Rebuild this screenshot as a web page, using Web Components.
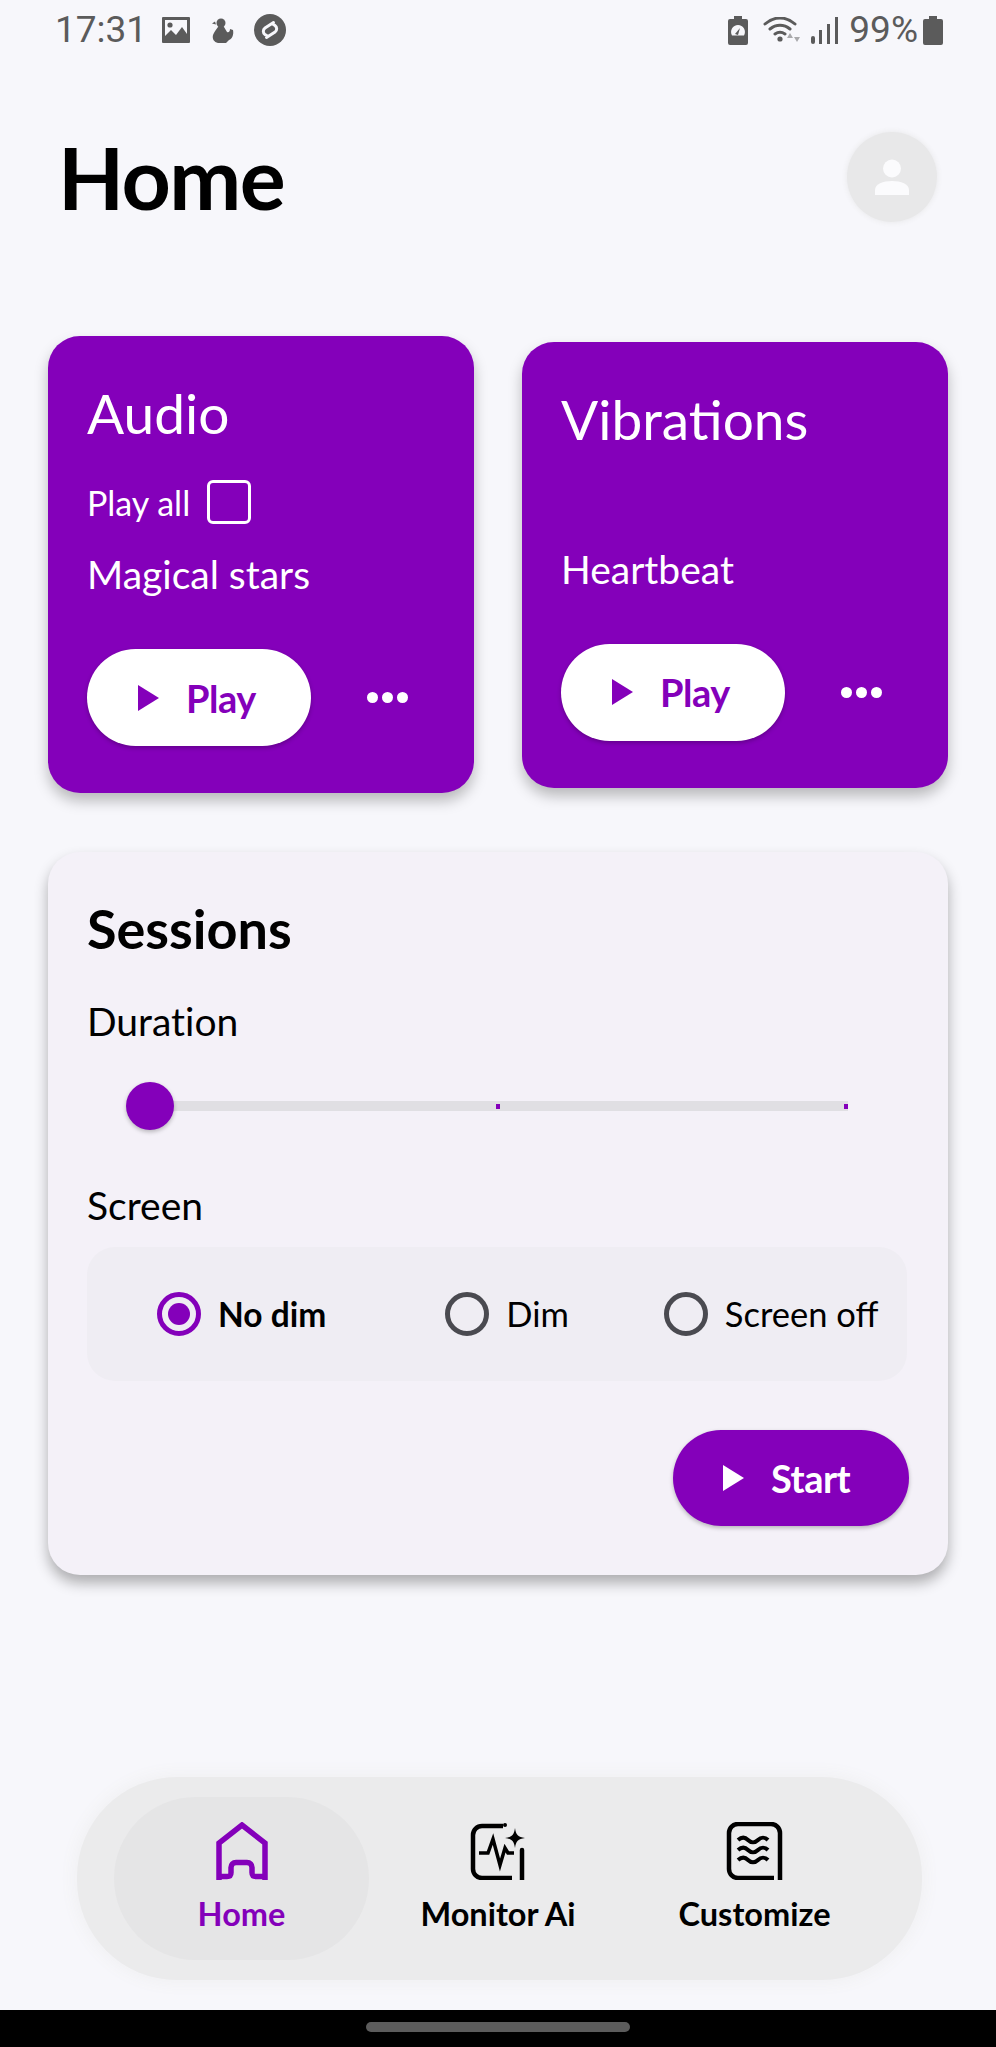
<!DOCTYPE html>
<html lang="en">
<head>
<meta charset="utf-8">
<title>Home</title>
<style>
  html, body { margin: 0; padding: 0; }
  body { background: #f7f7fb; font-family: Lato, "Liberation Sans", sans-serif; font-variant-ligatures: none; }
</style>
</head>
<body>
<app-screen>
  <status-bar></status-bar>
  <page-header>Home</page-header>
  <div slot="cards">
    <sound-card heading="Audio" track="Magical stars" playall></sound-card>
    <sound-card heading="Vibrations" track="Heartbeat"></sound-card>
  </div>
  <session-panel slot="session"></session-panel>
  <bottom-nav slot="nav">
    <nav-item icon="home" active>Home</nav-item>
    <nav-item icon="monitor">Monitor Ai</nav-item>
    <nav-item icon="customize">Customize</nav-item>
  </bottom-nav>
</app-screen>

<script>
const PURPLE = '#8400ba';

class AppScreen extends HTMLElement {
  connectedCallback() {
    this.attachShadow({ mode: 'open' });
    this.shadowRoot.innerHTML = `
      <style>
        :host { display: flex; flex-direction: column; width: 996px; height: 2047px; overflow: hidden; background: #f7f7fb; }
        ::slotted([slot=cards]) { display: grid; grid-template-columns: 426px 426px; column-gap: 48px; align-items: center; margin: 114px 48px 0; }
        ::slotted([slot=session]) { margin: 59px 48px 0; }
        ::slotted([slot=nav]) { margin: auto 74px 30px 77px; }
        .home-bar { height: 37px; background: #000; display: flex; align-items: center; justify-content: center; }
        .home-bar i { display: block; width: 264px; height: 10px; border-radius: 5px; background: #5c5c5c; margin-top: -3px; }
      </style>
      <slot></slot>
      <slot name="cards"></slot>
      <slot name="session"></slot>
      <slot name="nav"></slot>
      <div class="home-bar"><i></i></div>
    `;
  }
}

class StatusBar extends HTMLElement {
  connectedCallback() {
    this.attachShadow({ mode: 'open' });
    this.shadowRoot.innerHTML = `
      <style>
        :host { display: flex; align-items: center; justify-content: space-between; height: 60px; padding: 0 53px 0 55px; box-sizing: border-box; color: #5b5b5b; font: 400 37px/60px Roboto, sans-serif; }
        .side { display: flex; align-items: center; }
        svg { display: block; fill: #5b5b5b; }
      </style>
      <div class="side">
        <span>17:31</span>
        <svg style="margin-left:15px" width="28" height="26" viewBox="0 0 28 26"><path fill-rule="evenodd" d="M1 0h26a1 1 0 0 1 1 1v24a1 1 0 0 1-1 1H1a1 1 0 0 1-1-1V1a1 1 0 0 1 1-1zM3 3v16l6-6 5 5 6-8 5 7V3z"/><circle cx="8" cy="8" r="2.6"/></svg>
        <svg style="margin-left:22px" width="22" height="25" viewBox="0 0 22 25"><circle cx="9" cy="5" r="4.5"/><path d="M3 3.5 0 5.5l4 1zM6 9h6l3 5c2 1 3-1 3-3l3 1c1 5-1 9-4 10l-3 3H6c-4-1-6-4-5-8 1-3 3-5 5-8z"/></svg>
        <svg style="margin-left:20px" width="32" height="32" viewBox="0 0 32 32"><circle cx="16" cy="16" r="16"/><path d="M19.500 8.500 11 14a4 4 0 0 0 0 6.500l3 2M12.500 23.500 21 18a4 4 0 0 0 0-6.500l-3-2" fill="none" stroke="#f7f7fb" stroke-width="3" stroke-linecap="round"/></svg>
      </div>
      <div class="side">
        <svg width="20" height="29" viewBox="0 0 20 29"><path fill-rule="evenodd" d="M6 0h8v3h4a2 2 0 0 1 2 2v22a2 2 0 0 1-2 2H2a2 2 0 0 1-2-2V5a2 2 0 0 1 2-2h4zM10 9a7 7 0 0 0-6 10.500h12A7 7 0 0 0 10 9z"/><path d="M7 18l5-6-2 7z"/></svg>
        <svg style="margin-left:15px" width="38" height="26" viewBox="0 0 38 26"><path d="M2 7C11-1 23-1 32 7M7 12c6-5 14-5 20 0M12 17c3-2 7-2 10 0" fill="none" stroke="#5b5b5b" stroke-width="3" stroke-linecap="round"/><circle cx="17" cy="22" r="2.600"/><path d="M27 16l3 5h-6zM34 25l-3-5h6z" fill="#a9a9ab"/></svg>
        <svg style="margin-left:10px" width="28" height="27" viewBox="0 0 28 27"><rect x="0" y="19" width="4" height="8" rx="2"/><rect x="8" y="13" width="3" height="14"/><rect x="16" y="7" width="3" height="20"/><rect x="24" y="0" width="3" height="27"/></svg>
        <span style="margin-left:10px">99%</span>
        <svg style="margin-left:5px" width="20" height="29" viewBox="0 0 20 29"><path d="M6 0h8v3h4a2 2 0 0 1 2 2v22a2 2 0 0 1-2 2H2a2 2 0 0 1-2-2V5a2 2 0 0 1 2-2h4z"/></svg>
      </div>
    `;
  }
}

class PageHeader extends HTMLElement {
  connectedCallback() {
    this.attachShadow({ mode: 'open' });
    this.shadowRoot.innerHTML = `
      <style>
        :host { display: flex; align-items: center; justify-content: space-between; height: 90px; margin-top: 72px; padding: 0 59px 0 58px; }
        h1 { margin: 0; font: 700 86px/90px Lato, sans-serif; letter-spacing: -1.5px; color: #000; }
        .avatar { width: 90px; height: 90px; border-radius: 50%; background: #e8e8e9; box-shadow: 0 0 5px 1px #ebebed; display: flex; align-items: center; justify-content: center; }
        svg { display: block; fill: #fbfbfd; }
      </style>
      <h1><slot></slot></h1>
      <div class="avatar">
        <svg width="34" height="36" viewBox="0 0 34 36"><circle cx="17" cy="9.500" r="9"/><path d="M0 36v-5c0-6 8-9 17-9s17 3 17 9v5z"/></svg>
      </div>
    `;
  }
}

class PlayButton extends HTMLElement {
  connectedCallback() {
    this.attachShadow({ mode: 'open' });
    this.shadowRoot.innerHTML = `
      <style>
        :host { display: inline-flex; align-items: center; box-sizing: border-box; height: 97px; border-radius: 49px; background: var(--btn-bg, #fff); color: var(--btn-fg, ${PURPLE}); box-shadow: 0 2px 4px rgba(0,0,0,.25); font: 700 38px/1 Lato, sans-serif; letter-spacing: -.5px; padding-left: 51px; width: var(--btn-width, 224px); }
        svg { display: block; fill: currentColor; margin-right: 27px; flex: none; }
      </style>
      <svg width="21" height="26" viewBox="0 0 21 26"><path d="M0 0l21 13L0 26z"/></svg>
      <slot></slot>
    `;
  }
}

class SoundCard extends HTMLElement {
  connectedCallback() {
    const playAll = this.hasAttribute('playall');
    this.attachShadow({ mode: 'open' });
    this.shadowRoot.innerHTML = `
      <style>
        :host { display: block; }
        .card { background: ${PURPLE}; color: #fff; border-radius: 32px; padding: 46px 39px 47px; box-shadow: 0 8px 14px rgba(0,0,0,.25); font-family: Lato, sans-serif; }
        h2 { margin: 0; font: 400 55px/62px Lato, sans-serif; }
        .all { display: flex; align-items: center; gap: 17px; height: 44px; margin-top: 36px; font-size: 34px; }
        .box { width: 44px; height: 44px; box-sizing: border-box; border: 3px solid #fff; border-radius: 6px; }
        .spacer { height: 0; margin-top: 97px; }
        .track { font-size: 39px; line-height: 44px; margin-top: 28px; }
        .actions { display: flex; align-items: center; margin-top: 53px; }
        .dots { display: flex; gap: 4px; margin-left: 56px; }
        .dots i { display: block; width: 11px; height: 11px; border-radius: 50%; background: #fff; }
      </style>
      <div class="card">
        <h2>${this.getAttribute('heading')}</h2>
        ${playAll ? '<div class="all"><span>Play all</span><span class="box"></span></div>' : '<div class="spacer"></div>'}
        <div class="track">${this.getAttribute('track')}</div>
        <div class="actions">
          <play-button>Play</play-button>
          <div class="dots"><i></i><i></i><i></i></div>
        </div>
      </div>
    `;
  }
}

class DurationSlider extends HTMLElement {
  connectedCallback() {
    this.attachShadow({ mode: 'open' });
    this.shadowRoot.innerHTML = `
      <style>
        :host { display: block; position: relative; height: 48px; width: 722px; }
        .track { position: absolute; left: 24px; right: 0; top: 19px; height: 10px; background: #e0dfe3; }
        .tick { position: absolute; top: 22px; width: 4px; height: 5px; background: ${PURPLE}; }
        .thumb { position: absolute; left: 0; top: 0; width: 48px; height: 48px; border-radius: 50%; background: ${PURPLE}; box-shadow: 0 2px 4px rgba(0,0,0,.25); }
      </style>
      <div class="track"></div>
      <div class="tick" style="left:370px"></div>
      <div class="tick" style="left:718px"></div>
      <div class="thumb"></div>
    `;
  }
}

class RadioOption extends HTMLElement {
  connectedCallback() {
    const on = this.hasAttribute('checked');
    this.attachShadow({ mode: 'open' });
    this.shadowRoot.innerHTML = `
      <style>
        :host { display: flex; align-items: center; gap: 17px; font: ${on ? 700 : 400} ${on ? 33.5 : 34.5}px/44px Lato, sans-serif; color: #000; }
        .dot { box-sizing: border-box; width: 44px; height: 44px; border-radius: 50%; border: 5px solid ${on ? PURPLE : '#4a4a50'}; display: flex; align-items: center; justify-content: center; }
        .dot i { display: ${on ? 'block' : 'none'}; width: 22px; height: 22px; border-radius: 50%; background: ${PURPLE}; }
      </style>
      <span class="dot"><i></i></span>
      <span><slot></slot></span>
    `;
  }
}

class SessionPanel extends HTMLElement {
  connectedCallback() {
    this.attachShadow({ mode: 'open' });
    this.shadowRoot.innerHTML = `
      <style>
        :host { display: block; box-sizing: border-box; height: 723px; padding: 46px 39px 0; background: #f4f1f8; border-radius: 32px; box-shadow: 0 8px 14px rgba(0,0,0,.3); font-family: Lato, sans-serif; color: #000; }
        h2 { margin: 0; font: 700 54px/62px Lato, sans-serif; }
        .label { font-size: 39px; line-height: 44px; }
        .duration { margin-top: 39px; }
        duration-slider { margin-top: 39px; margin-left: 39px; }
        .screen { margin-top: 53px; }
        .group { box-sizing: border-box; height: 134px; margin-top: 20px; width: 820px; border-radius: 28px; background: #efedf3; display: flex; align-items: center; padding-left: 70px; }
        .group radio-option:nth-child(2) { margin-left: 119px; }
        .group radio-option:nth-child(3) { margin-left: 95px; }
        .foot { display: flex; justify-content: flex-end; margin-top: 49px; width: 822px; --btn-bg: ${PURPLE}; --btn-fg: #fff; --btn-width: 236px; }
        play-button { height: 96px; padding-left: 50px; }
      </style>
      <h2>Sessions</h2>
      <div class="label duration">Duration</div>
      <duration-slider></duration-slider>
      <div class="label screen">Screen</div>
      <div class="group">
        <radio-option checked>No dim</radio-option>
        <radio-option>Dim</radio-option>
        <radio-option>Screen off</radio-option>
      </div>
      <div class="foot"><play-button>Start</play-button></div>
    `;
  }
}

const NAV_ICONS = {
  home: `<svg width="52" height="58" viewBox="0 0 52 58" fill="none" stroke="currentColor" stroke-width="5.500"><path d="M3 58V21L26 3l23 18v37"/><path d="M3 54.500h8c3 0 4-1 4-4v-5c0-3 2-5 5-5h11c3 0 5 2 5 5v5c0 3 1 4 4 4h9"/></svg>`,
  monitor: `<svg width="56" height="58" viewBox="0 0 56 58" fill="none" stroke="currentColor" stroke-width="4.500"><path d="M33 4H12a9 9 0 0 0-9 9v34a9 9 0 0 0 9 9h30"/><path d="M52 28v30" stroke-linecap="round"/><path d="M9 31h9l5-14 7 26 5-17 3 5h6" stroke-width="3.500"/><path d="M45 6c1 7 3 9 10 10-7 1-9 3-10 10-1-7-3-9-10-10 7-1 9-3 10-10z" fill="currentColor" stroke="none"/><circle cx="35" cy="3" r="2" fill="currentColor" stroke="none"/></svg>`,
  customize: `<svg width="57" height="58" viewBox="0 0 57 58" fill="none" stroke="currentColor" stroke-width="4.500"><path d="M48 56H12a9 9 0 0 1-9-9V11a9 9 0 0 1 9-9h33a9 9 0 0 1 9 9v47"/><path d="M12 18c3.500-3 7-3 10 0s7 3 10 0 7-3 10 0M12 28c3.500-3 7-3 10 0s7 3 10 0 7-3 10 0M12 38c3.500-3 7-3 10 0s7 3 10 0 7-3 10 0" stroke-width="4"/></svg>`
};

class NavItem extends HTMLElement {
  connectedCallback() {
    const active = this.hasAttribute('active');
    this.attachShadow({ mode: 'open' });
    this.shadowRoot.innerHTML = `
      <style>
        :host { display: flex; flex-direction: column; align-items: center; height: 163px; padding-top: 25px; box-sizing: border-box; border-radius: 82px; color: ${active ? PURPLE : '#000'}; background: ${active ? '#e5e5e6' : 'transparent'}; font: 700 32.500px/40px Lato, sans-serif; }
        svg { display: block; }
        span { margin-top: 14px; white-space: nowrap; }
      </style>
      ${NAV_ICONS[this.getAttribute('icon')]}
      <span><slot></slot></span>
    `;
  }
}

class BottomNav extends HTMLElement {
  connectedCallback() {
    this.attachShadow({ mode: 'open' });
    this.shadowRoot.innerHTML = `
      <style>
        :host { display: grid; grid-template-columns: 255px 258px 255px; justify-content: start; height: 203px; box-sizing: border-box; padding: 20px 38px 20px 37px; border-radius: 100px; background: #ebebec; box-shadow: 0 0 16px 3px #f0f0f2; }
      </style>
      <slot></slot>
    `;
  }
}

customElements.define('app-screen', AppScreen);
customElements.define('status-bar', StatusBar);
customElements.define('page-header', PageHeader);
customElements.define('play-button', PlayButton);
customElements.define('sound-card', SoundCard);
customElements.define('duration-slider', DurationSlider);
customElements.define('radio-option', RadioOption);
customElements.define('session-panel', SessionPanel);
customElements.define('nav-item', NavItem);
customElements.define('bottom-nav', BottomNav);
</script>
</body>
</html>
